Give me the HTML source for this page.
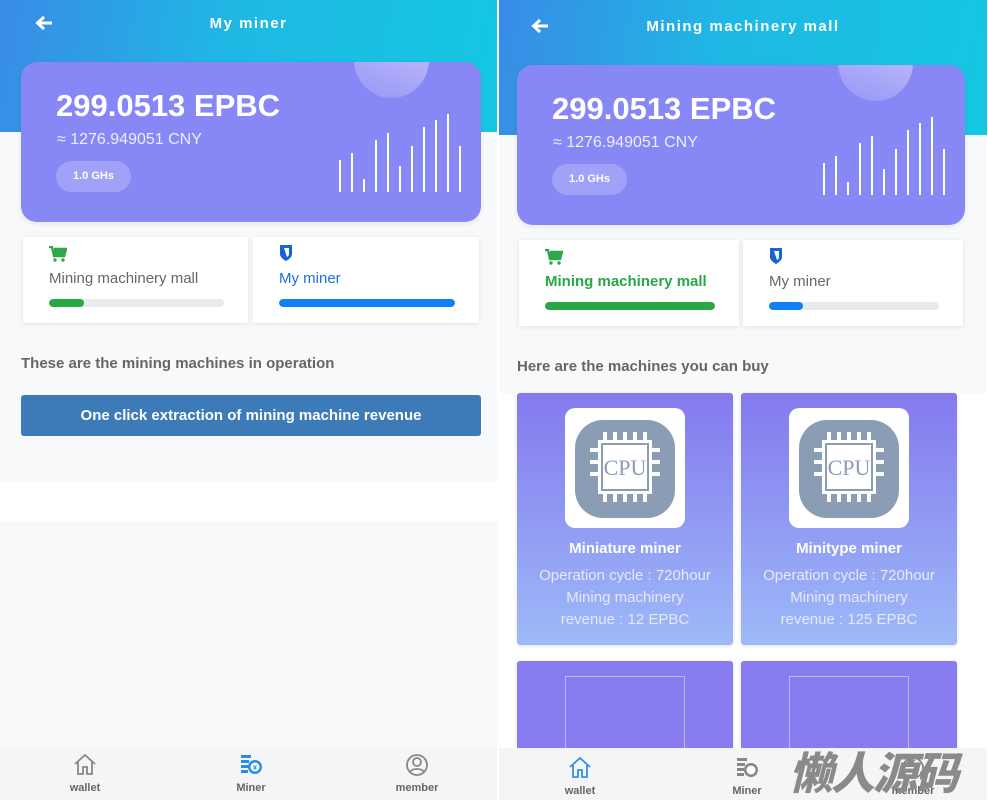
<!DOCTYPE html>
<html><head><meta charset="utf-8"><style>
*{margin:0;padding:0;box-sizing:border-box}
body{width:988px;height:800px;position:relative;background:#fff;font-family:"Liberation Sans",sans-serif;overflow:hidden}
.p{position:absolute;top:0;height:800px;background:#f7f9fb;overflow:hidden}
.hd{position:absolute;left:0;top:0;width:100%;height:132px;background:linear-gradient(100deg,#3a8be6 0%,#1fb7e4 45%,#14c8e2 100%)}
.ttl{position:absolute;top:15px;width:100%;text-align:center;color:#fff;font-weight:bold;font-size:15px;letter-spacing:1.5px}
.bk{position:absolute;left:35px;top:15px}
.card{position:absolute;height:160px;border-radius:16px;background:#8787f6;overflow:hidden;box-shadow:0 2px 6px rgba(0,0,0,.08)}
.circ{position:absolute;right:52px;top:-40px;width:75px;height:76px;border-radius:50%;background:linear-gradient(200deg,#c9c6fb,#9896f7)}
.amt{position:absolute;left:35px;top:26px;color:#fff;font-size:31px;font-weight:bold}
.cny{position:absolute;left:36px;top:69px;color:#eef;font-size:16px}
.pill{position:absolute;left:35px;top:99px;width:75px;height:31px;border-radius:16px;background:rgba(255,255,255,.22);color:#fff;font-size:11px;font-weight:bold;text-align:center;line-height:31px}
.bar{position:absolute;width:2px;background:#fff;bottom:30px}
.tab{position:absolute;height:86px;background:#fff;box-shadow:0 1px 4px rgba(0,0,0,.1)}
.tab .lb{position:absolute;left:26px;top:33px;font-size:15px}
.tab .tr{position:absolute;left:26px;top:62px;height:8px;border-radius:4px;background:#e8ebee;overflow:hidden}
.tab .fl{height:8px;border-radius:4px}
.sub{position:absolute;color:#666;font-size:15px;font-weight:bold}
.nav{position:absolute;left:0;bottom:0;width:100%;height:52px;background:#f4f5f7}
.ni{position:absolute;top:4px;width:80px;text-align:center;font-size:11px;font-weight:bold;color:#666}
.ni svg{display:block;margin:0 auto 4px}
.pc{position:absolute;width:216px;border-radius:3px;background:linear-gradient(180deg,#8479ee,#9dbaf8);text-align:center;color:#fff;box-shadow:0 1px 4px rgba(0,0,0,.12)}
.img{position:absolute;left:48px;top:15px;width:120px;height:120px;border-radius:10px;background:#fff}
.pc h4{position:absolute;top:147px;width:100%;font-size:15px}
.pc p{position:absolute;top:172px;width:100%;font-size:15px;line-height:22px;color:#e6e8fc;padding:0 22px}
</style></head><body>

<!-- LEFT -->
<div class="p" style="left:0;width:497px">
<div class="hd"></div>
<svg class="bk" width="18" height="16" viewBox="0 0 18 16"><path d="M17 8H3M9 2L2.5 8 9 14" fill="none" stroke="#fff" stroke-width="3"/></svg>
<div class="ttl">My miner</div>
<div class="card" style="left:21px;top:62px;width:460px">
<div class="circ"></div>
<div class="amt">299.0513 EPBC</div>
<div class="cny">≈ 1276.949051 CNY</div>
<div class="pill">1.0 GHs</div>
<div class="bar" style="left:318px;height:32px"></div>
<div class="bar" style="left:330px;height:39px"></div>
<div class="bar" style="left:342px;height:13px"></div>
<div class="bar" style="left:354px;height:52px"></div>
<div class="bar" style="left:366px;height:59px"></div>
<div class="bar" style="left:378px;height:26px"></div>
<div class="bar" style="left:390px;height:46px"></div>
<div class="bar" style="left:402px;height:65px"></div>
<div class="bar" style="left:414px;height:72px"></div>
<div class="bar" style="left:426px;height:78px"></div>
<div class="bar" style="left:438px;height:46px"></div>
</div>
<div class="tab" style="left:23px;top:237px;width:225px">
<svg style="position:absolute;left:26px;top:9px" width="18" height="16" viewBox="0 0 18 16"><path d="M0 1h3l2 9h10l2-7H5" fill="none" stroke="#2ea84a" stroke-width="2.4"/><rect x="5" y="3" width="11" height="6" fill="#2ea84a"/><circle cx="6" cy="14" r="1.7" fill="#2ea84a"/><circle cx="14" cy="14" r="1.7" fill="#2ea84a"/></svg>
<div class="lb" style="color:#666">Mining machinery mall</div>
<div class="tr" style="width:175px"><div class="fl" style="width:35px;background:#28a745"></div></div>
</div>
<div class="tab" style="left:253px;top:237px;width:226px">
<svg style="position:absolute;left:26px;top:7px" width="14" height="18" viewBox="0 0 14 18"><path d="M1 1h12v9c0 4-6 7-6 7s-6-3-6-7z" fill="#1565d8"/><path d="M5 4h5v6c0 2-2 3-2 3" fill="#fff"/></svg>
<div class="lb" style="color:#1a6fe0">My miner</div>
<div class="tr" style="width:176px"><div class="fl" style="width:176px;background:#1080f5"></div></div>
</div>
<div class="sub" style="left:21px;top:355px">These are the mining machines in operation</div>
<div style="position:absolute;left:21px;top:395px;width:460px;height:41px;border-radius:3px;background:#3d7ab8;color:#fff;font-size:15px;font-weight:bold;text-align:center;line-height:41px">One click extraction of mining machine revenue</div>
<div style="position:absolute;left:0;top:481px;width:100%;height:40px;background:#fff"></div>
<div class="nav">
<div class="ni" style="left:45px"><svg width="26" height="26" viewBox="0 0 26 26" fill="none" stroke="#888" stroke-width="1.8"><path d="M3 12L13 3l10 9M6 10v12h5v-7h4v7h5V10"/></svg>wallet</div>
<div class="ni" style="left:211px"><svg width="26" height="26" viewBox="0 0 26 26"><rect x="3" y="3" width="10" height="3" fill="#2a8ce8"/><rect x="3" y="8" width="8" height="3" fill="#2a8ce8"/><rect x="3" y="13" width="7" height="3" fill="#2a8ce8"/><rect x="3" y="18" width="7" height="3" fill="#2a8ce8"/><circle cx="17" cy="15" r="7" fill="#2a8ce8"/><circle cx="17" cy="15" r="4.5" fill="#fff"/><text x="17" y="18" font-size="7" text-anchor="middle" fill="#2a8ce8">¥</text></svg>Miner</div>
<div class="ni" style="left:377px"><svg width="26" height="26" viewBox="0 0 26 26" fill="none" stroke="#888" stroke-width="1.8"><circle cx="13" cy="13" r="10"/><circle cx="13" cy="10" r="4"/><path d="M6 20c2-4 12-4 14 0"/></svg>member</div>
</div>
</div>

<!-- RIGHT -->
<div class="p" style="left:499px;width:488px">
<div class="hd" style="height:135px"></div>
<svg class="bk" style="top:18px;left:32px" width="18" height="16" viewBox="0 0 18 16"><path d="M17 8H3M9 2L2.5 8 9 14" fill="none" stroke="#fff" stroke-width="3"/></svg>
<div class="ttl" style="top:18px">Mining machinery mall</div>
<div class="card" style="left:18px;top:65px;width:448px">
<div class="circ"></div>
<div class="amt">299.0513 EPBC</div>
<div class="cny">≈ 1276.949051 CNY</div>
<div class="pill">1.0 GHs</div>
<div class="bar" style="left:306px;height:32px"></div>
<div class="bar" style="left:318px;height:39px"></div>
<div class="bar" style="left:330px;height:13px"></div>
<div class="bar" style="left:342px;height:52px"></div>
<div class="bar" style="left:354px;height:59px"></div>
<div class="bar" style="left:366px;height:26px"></div>
<div class="bar" style="left:378px;height:46px"></div>
<div class="bar" style="left:390px;height:65px"></div>
<div class="bar" style="left:402px;height:72px"></div>
<div class="bar" style="left:414px;height:78px"></div>
<div class="bar" style="left:426px;height:46px"></div>
</div>
<div class="tab" style="left:20px;top:240px;width:220px">
<svg style="position:absolute;left:26px;top:9px" width="18" height="16" viewBox="0 0 18 16"><path d="M0 1h3l2 9h10l2-7H5" fill="none" stroke="#2ea84a" stroke-width="2.4"/><rect x="5" y="3" width="11" height="6" fill="#2ea84a"/><circle cx="6" cy="14" r="1.7" fill="#2ea84a"/><circle cx="14" cy="14" r="1.7" fill="#2ea84a"/></svg>
<div class="lb" style="color:#28a745;font-weight:bold">Mining machinery mall</div>
<div class="tr" style="width:170px"><div class="fl" style="width:170px;background:#28a745"></div></div>
</div>
<div class="tab" style="left:244px;top:240px;width:220px">
<svg style="position:absolute;left:26px;top:7px" width="14" height="18" viewBox="0 0 14 18"><path d="M1 1h12v9c0 4-6 7-6 7s-6-3-6-7z" fill="#1565d8"/><path d="M5 4h5v6c0 2-2 3-2 3" fill="#fff"/></svg>
<div class="lb" style="color:#666">My miner</div>
<div class="tr" style="width:170px"><div class="fl" style="width:34px;background:#1080f5"></div></div>
</div>
<div class="sub" style="left:18px;top:358px">Here are the machines you can buy</div>
<div style="position:absolute;left:0;top:393px;width:100%;height:407px;background:#fff"></div>

<div class="pc" style="left:18px;top:393px;height:252px">
<div class="img"><svg width="120" height="120" viewBox="0 0 120 120"><rect x="10" y="12" width="100" height="98" rx="28" fill="#8a9db5"/><rect x="33" y="32" width="54" height="54" fill="#fff"/><rect x="37" y="36" width="46" height="46" fill="none" stroke="#8a9db5" stroke-width="2"/><g fill="#fff"><rect x="38" y="24" width="4" height="8"/><rect x="48" y="24" width="4" height="8"/><rect x="58" y="24" width="4" height="8"/><rect x="68" y="24" width="4" height="8"/><rect x="78" y="24" width="4" height="8"/><rect x="38" y="86" width="4" height="8"/><rect x="48" y="86" width="4" height="8"/><rect x="58" y="86" width="4" height="8"/><rect x="68" y="86" width="4" height="8"/><rect x="78" y="86" width="4" height="8"/><rect x="25" y="40" width="8" height="4"/><rect x="25" y="52" width="8" height="4"/><rect x="25" y="64" width="8" height="4"/><rect x="87" y="40" width="8" height="4"/><rect x="87" y="52" width="8" height="4"/><rect x="87" y="64" width="8" height="4"/></g><text x="60" y="67" font-family="Liberation Serif" font-size="22" text-anchor="middle" fill="#8a9db5">CPU</text></svg></div>
<h4>Miniature miner</h4>
<p>Operation cycle : 720hour Mining machinery revenue : 12 EPBC</p>
</div>
<div class="pc" style="left:242px;top:393px;height:252px">
<div class="img"><svg width="120" height="120" viewBox="0 0 120 120"><rect x="10" y="12" width="100" height="98" rx="28" fill="#8a9db5"/><rect x="33" y="32" width="54" height="54" fill="#fff"/><rect x="37" y="36" width="46" height="46" fill="none" stroke="#8a9db5" stroke-width="2"/><g fill="#fff"><rect x="38" y="24" width="4" height="8"/><rect x="48" y="24" width="4" height="8"/><rect x="58" y="24" width="4" height="8"/><rect x="68" y="24" width="4" height="8"/><rect x="78" y="24" width="4" height="8"/><rect x="38" y="86" width="4" height="8"/><rect x="48" y="86" width="4" height="8"/><rect x="58" y="86" width="4" height="8"/><rect x="68" y="86" width="4" height="8"/><rect x="78" y="86" width="4" height="8"/><rect x="25" y="40" width="8" height="4"/><rect x="25" y="52" width="8" height="4"/><rect x="25" y="64" width="8" height="4"/><rect x="87" y="40" width="8" height="4"/><rect x="87" y="52" width="8" height="4"/><rect x="87" y="64" width="8" height="4"/></g><text x="60" y="67" font-family="Liberation Serif" font-size="22" text-anchor="middle" fill="#8a9db5">CPU</text></svg></div>
<h4>Minitype miner</h4>
<p>Operation cycle : 720hour Mining machinery revenue : 125 EPBC</p>
</div>
<div class="pc" style="left:18px;top:661px;height:150px;background:#867cef"><div style="position:absolute;left:48px;top:15px;width:120px;height:120px;border:1px solid #b9b9f5"></div></div>
<div class="pc" style="left:242px;top:661px;height:150px;background:#867cef"><div style="position:absolute;left:48px;top:15px;width:120px;height:120px;border:1px solid #b9b9f5"></div></div>

<div class="nav" style="height:52px">
<div class="ni" style="left:41px;top:7px;color:#666"><svg width="26" height="26" viewBox="0 0 26 26" fill="none" stroke="#3a8ee8" stroke-width="1.8"><path d="M3 12L13 3l10 9M6 10v12h5v-7h4v7h5V10"/></svg>wallet</div>
<div class="ni" style="left:208px;top:7px"><svg width="26" height="26" viewBox="0 0 26 26"><rect x="3" y="3" width="10" height="3" fill="#888"/><rect x="3" y="8" width="8" height="3" fill="#888"/><rect x="3" y="13" width="7" height="3" fill="#888"/><rect x="3" y="18" width="7" height="3" fill="#888"/><circle cx="17" cy="15" r="7" fill="#888"/><circle cx="17" cy="15" r="4.5" fill="#fff"/></svg>Miner</div>
<div class="ni" style="left:374px;top:7px"><svg width="26" height="26" viewBox="0 0 26 26" fill="none" stroke="#888" stroke-width="1.8"><circle cx="13" cy="13" r="10"/></svg>member</div>
</div>
<div style="position:absolute;left:290px;top:738px;font-family:'Noto Sans CJK SC',sans-serif;font-size:44px;font-weight:900;color:#8a8a8a;letter-spacing:-2px;font-style:italic">懒人源码</div>
</div>
</body></html>
